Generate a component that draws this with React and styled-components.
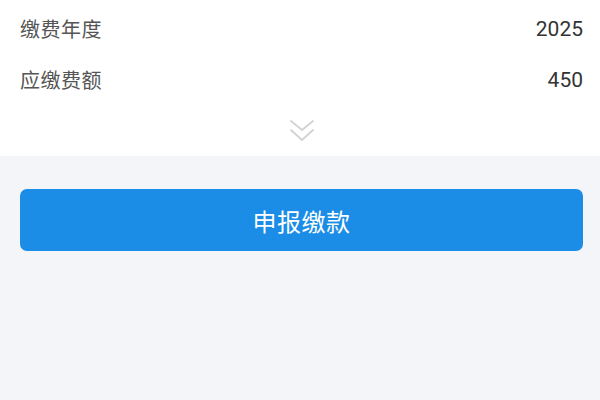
import React from "react";
import styled, { createGlobalStyle } from "styled-components";

const Global = createGlobalStyle`
  html, body { margin: 0; padding: 0; background: #f3f5f9; }
  body { font-family: Roboto, "Noto Sans CJK SC", sans-serif; }
`;

const Page = styled.div`
  width: 600px;
  height: 400px;
  background: #f3f5f9;
  display: flex;
  flex-direction: column;
`;

const Card = styled.div`
  background: #ffffff;
  padding: 3px 17px 0 20px;
  display: flex;
  flex-direction: column;
`;

const Row = styled.div`
  height: 51px;
  display: flex;
  align-items: center;
  justify-content: space-between;
`;

const Label = styled.span`
  font-family: "Noto Sans CJK SC", sans-serif;
  font-size: 20px;
  color: #555555;
  letter-spacing: 0.5px;
`;

const Value = styled.span`
  font-family: Roboto, sans-serif;
  font-size: 21px;
  color: #333333;
`;

const Toggle = styled.div`
  height: 51px;
  display: flex;
  align-items: center;
  justify-content: center;
`;

const Actions = styled.div`
  padding: 33px 17px 0 20px;
`;

const Button = styled.button`
  width: 100%;
  height: 62px;
  border: none;
  border-radius: 7px;
  background: #1b8de6;
  color: #ffffff;
  font-family: "Noto Sans CJK SC", sans-serif;
  font-size: 24px;
  letter-spacing: 0.5px;
  display: flex;
  align-items: center;
  justify-content: center;
  padding: 0;
`;

const rows = [
  { label: "缴费年度", value: "2025" },
  { label: "应缴费额", value: "450" },
];

export default function App() {
  return (
    <Page>
      <Global />
      <Card>
        {rows.map((r) => (
          <Row key={r.label}>
            <Label>{r.label}</Label>
            <Value>{r.value}</Value>
          </Row>
        ))}
        <Toggle>
          <svg width="26" height="24" viewBox="0 0 26 24" fill="none" stroke="#d2d2d2" strokeWidth="1.8" strokeLinecap="round" strokeLinejoin="round">
            <polyline points="2,2 13,11 24,2" />
            <polyline points="2,11 13,21 24,11" />
          </svg>
        </Toggle>
      </Card>
      <Actions>
        <Button>申报缴款</Button>
      </Actions>
    </Page>
  );
}
